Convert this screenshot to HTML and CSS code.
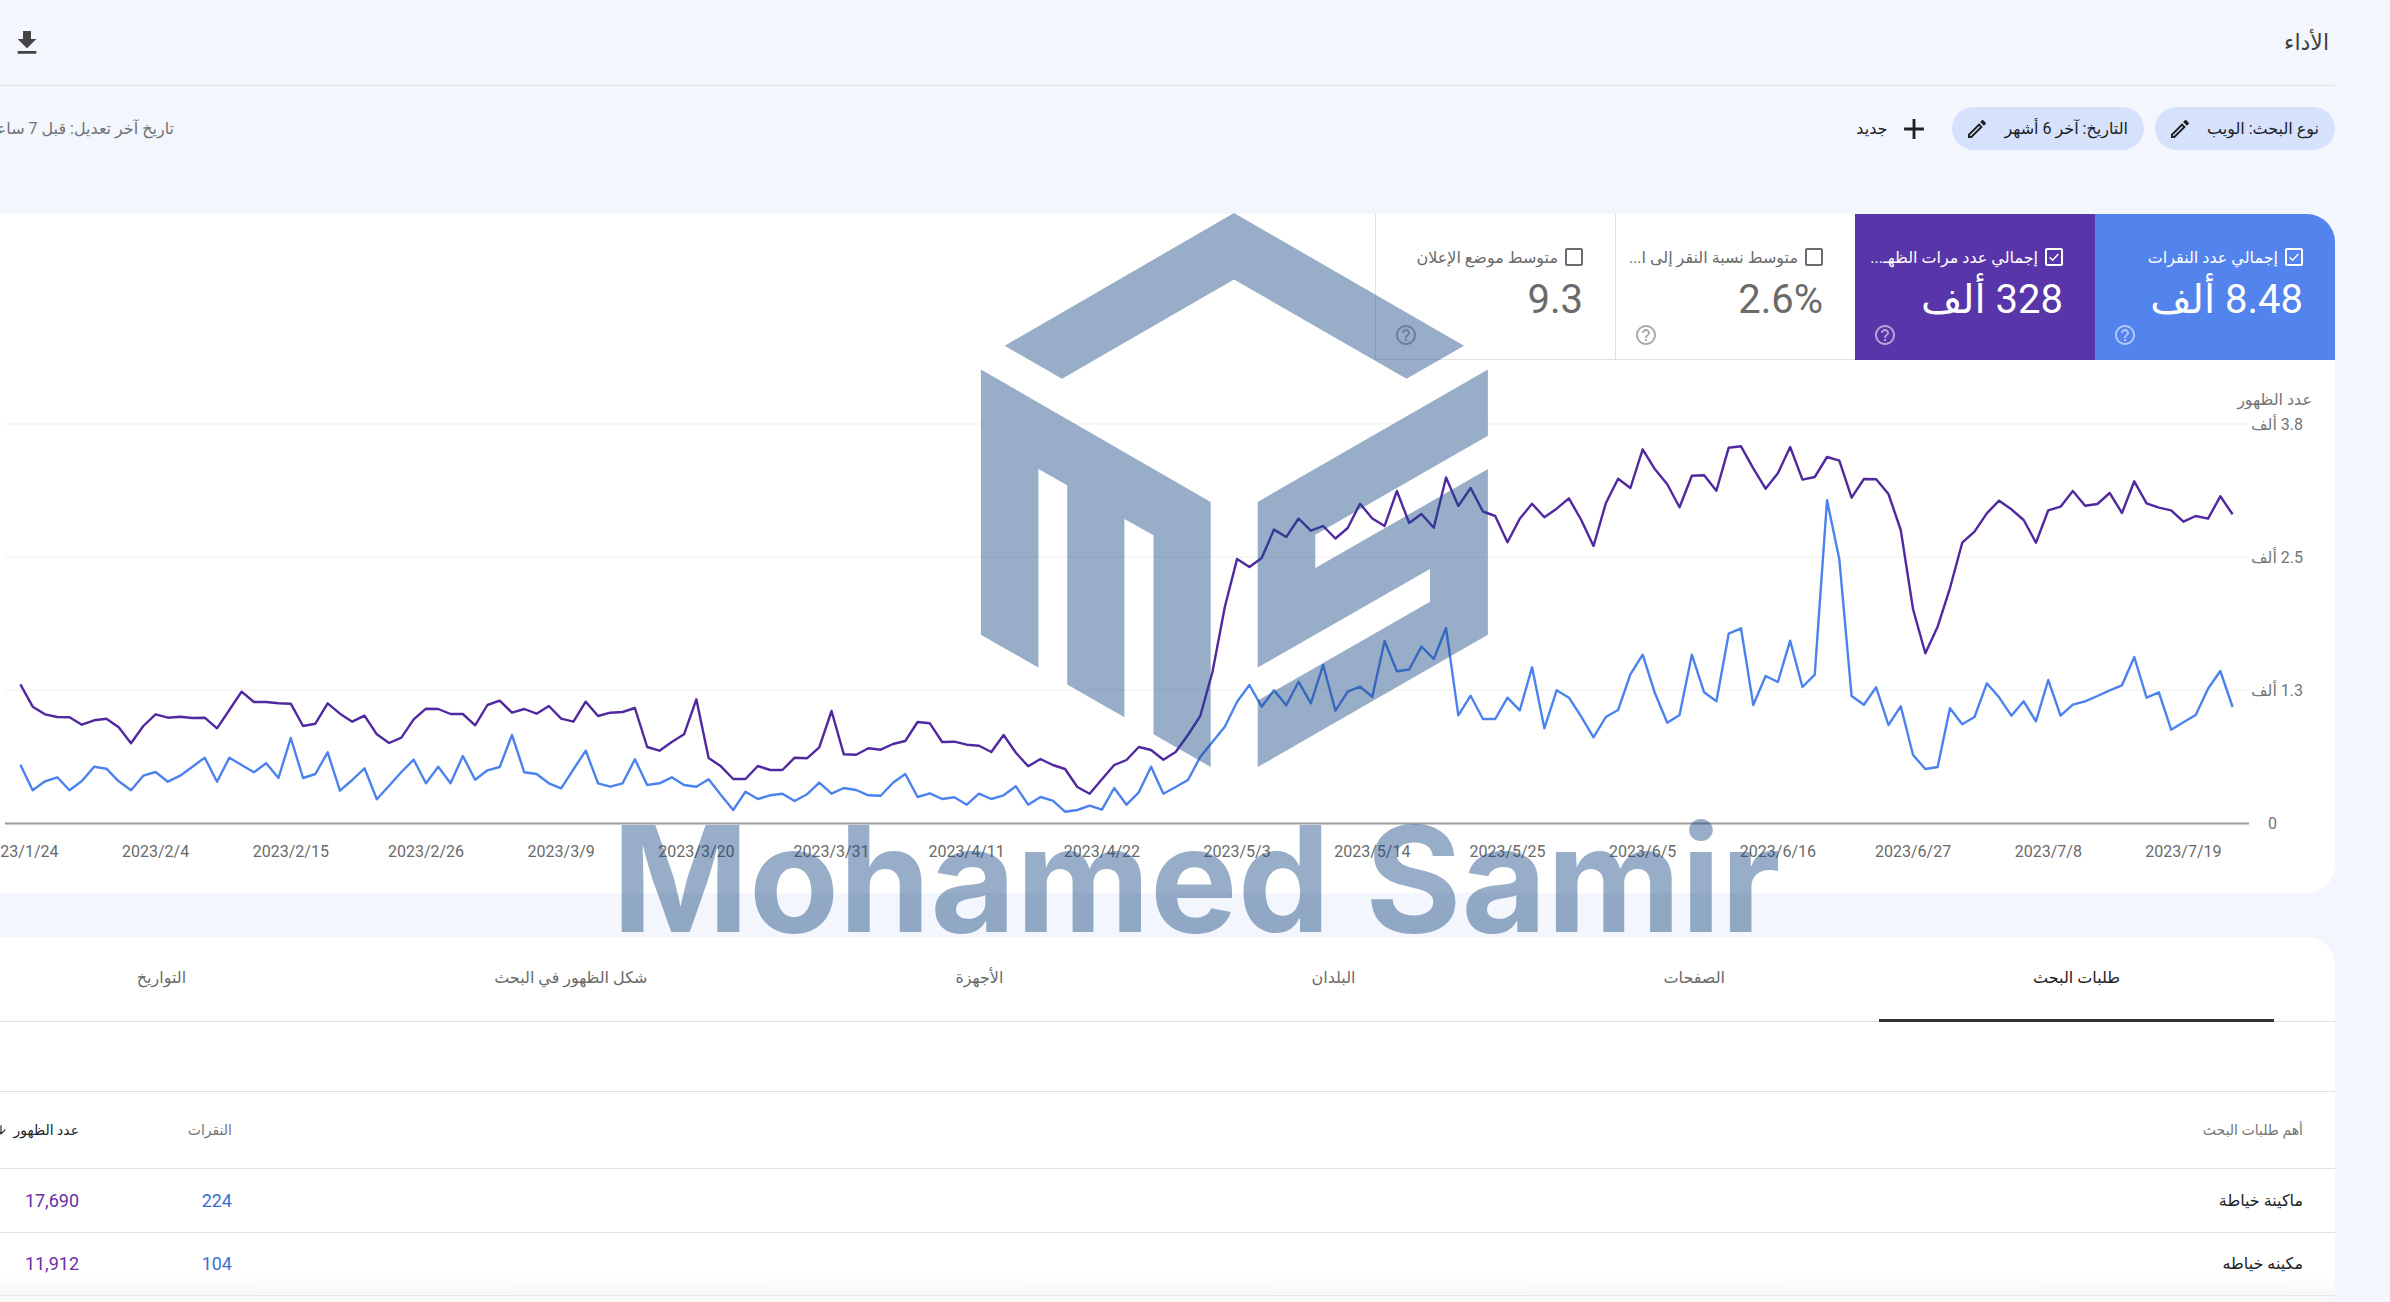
FILE: index.html
```html
<!DOCTYPE html>
<html lang="ar" dir="rtl">
<head>
<meta charset="utf-8">
<title>الأداء</title>
<link rel="stylesheet" href="styles.css">
</head>
<body>
<svg class="defs" width="0" height="0" aria-hidden="true">
  <symbol id="i-edit" viewBox="0 0 24 24"><path d="M14.06 9.02l.92.92L5.92 19H5v-.92l9.06-9.06M17.66 3c-.25 0-.51.1-.7.29l-1.83 1.83 3.75 3.75 1.83-1.83c.39-.39.39-1.02 0-1.41l-2.34-2.34c-.2-.2-.45-.29-.71-.29zm-3.6 3.19L3 17.25V21h3.75L17.81 9.94l-3.75-3.75z"/></symbol>
  <symbol id="i-box" viewBox="0 0 24 24"><path d="M19 5v14H5V5h14m0-2H5c-1.1 0-2 .9-2 2v14c0 1.1.9 2 2 2h14c1.1 0 2-.9 2-2V5c0-1.1-.9-2-2-2z"/></symbol>
  <symbol id="i-check" viewBox="0 0 24 24"><path d="M19 5v14H5V5h14m0-2H5c-1.1 0-2 .9-2 2v14c0 1.1.9 2 2 2h14c1.1 0 2-.9 2-2V5c0-1.1-.9-2-2-2z"/><path d="M7.6 12.2l3 3 5.8-6.2" fill="none" stroke="currentColor" stroke-width="1.5"/></symbol>
  <symbol id="i-help" viewBox="0 0 24 24"><path d="M11 18h2v-2h-2v2zm1-16C6.48 2 2 6.48 2 12s4.48 10 10 10 10-4.48 10-10S17.52 2 12 2zm0 18c-4.41 0-8-3.59-8-8s3.59-8 8-8 8 3.59 8 8-3.59 8-8 8zm0-14c-2.21 0-4 1.79-4 4h2c0-1.1.9-2 2-2s2 .9 2 2c0 2-3 1.75-3 5h2c0-2.25 3-2.5 3-5 0-2.21-1.79-4-4-4z"/></symbol>
</svg>

<main class="page">
  <header class="topbar">
    <h1 class="title">الأداء</h1>
    <svg class="icon-download" viewBox="0 0 24 24"><path d="M19 9h-4V3H9v6H5l7 7 7-7zM5 18v2h14v-2H5z"/></svg>
  </header>

  <div class="toolbar">
    <button class="chip"><span>نوع البحث: الويب</span><svg class="icon-edit"><use href="#i-edit"/></svg></button>
    <button class="chip"><span>التاريخ: آخر 6 أشهر</span><svg class="icon-edit"><use href="#i-edit"/></svg></button>
    <button class="new-btn"><svg class="icon-add" viewBox="0 0 24 24"><path d="M19 13h-6v6h-2v-6H5v-2h6V5h2v6h6v2z"/></svg><span>جديد</span></button>
    <div class="updated">تاريخ آخر تعديل: قبل 7 ساعات</div>
  </div>

  <section class="card chart-card">
    <div class="tiles">
      <div class="tile tile-blue">
        <div class="tile-label"><svg class="icon-box"><use href="#i-check"/></svg><span>إجمالي عدد النقرات</span></div>
        <div class="tile-value">8.48 ألف</div>
        <svg class="icon-help"><use href="#i-help"/></svg>
      </div>
      <div class="tile tile-purple">
        <div class="tile-label"><svg class="icon-box"><use href="#i-check"/></svg><span>إجمالي عدد مرات الظهـ...</span></div>
        <div class="tile-value">328 ألف</div>
        <svg class="icon-help"><use href="#i-help"/></svg>
      </div>
      <div class="tile tile-plain">
        <div class="tile-label"><svg class="icon-box"><use href="#i-box"/></svg><span>متوسط نسبة النقر إلى ا...</span></div>
        <div class="tile-value">2.6%</div>
        <svg class="icon-help"><use href="#i-help"/></svg>
      </div>
      <div class="tile tile-plain">
        <div class="tile-label"><svg class="icon-box"><use href="#i-box"/></svg><span>متوسط موضع الإعلان</span></div>
        <div class="tile-value">9.3</div>
        <svg class="icon-help"><use href="#i-help"/></svg>
      </div>
    </div>

    <svg class="chart" viewBox="0 360 2335 533" width="2335" height="533">
      <g class="grid">
        <line x1="5" x2="2249" y1="424" y2="424"/>
        <line x1="5" x2="2249" y1="557" y2="557"/>
        <line x1="5" x2="2249" y1="690" y2="690"/>
      </g>
      <line class="axis" x1="5" x2="2249" y1="823.5" y2="823.5"/>
      <g transform="translate(20.4 0) scale(12.29 1)">
        <polyline class="line line-purple" points="0,684.3 1,706.7 2,714.3 3,717 4,717.3 5,724.7 6,720.3 7,718.7 8,727.3 9,743.3 10,726 11,714.3 12,717.7 13,716.7 14,718 15,717.7 16,728.3 17,710 18,691.7 19,702 20,702 21,703.3 22,703.7 23,726 24,723.7 25,703.3 26,713.7 27,721.7 28,715.7 29,734.3 30,743 31,737.7 32,719.3 33,708.7 34,709 35,714 36,714 37,725.3 38,705 39,700.7 40,712.7 41,709 42,713.7 43,706 44,718.7 45,721.7 46,701.7 47,716 48,712.7 49,712 50,708 51,747 52,750.7 53,742 54,734.3 55,699.3 56,758 57,766.3 58,779 59,779 60,766 61,770 62,770 63,757.7 64,758.3 65,747.3 66,711 67,754.3 68,754.7 69,748.3 70,749.7 71,744 72,741 73,722 74,723.3 75,742 76,741.7 77,744.7 78,745.7 79,752 80,735 81,752.7 82,766.3 83,759 84,765 85,769 86,787 87,793.7 88,779.3 89,765 90,760 91,747 92,750 93,759.7 94,752 95,735 96,716 97,671.7 98,607 99,558.9 100,567 101,558 102,529.6 103,537 104,518.5 105,530.7 106,526 107,538.5 108,528 109,503.7 110,518.5 111,526 112,491 113,523 114,514 115,527.8 116,477.5 117,506 118,488 119,511.5 120,516 121,542.3 122,518.7 123,503.7 124,517.3 125,508.7 126,498.3 127,520 128,546 129,503.3 130,478.7 131,488 132,449.3 133,469.3 134,484.3 135,507.3 136,475.7 137,475.3 138,490.7 139,447.7 140,446.3 141,468.3 142,488.7 143,473.3 144,447 145,479.7 146,477 147,457 148,460.7 149,497.7 150,479 151,479.3 152,494 153,530 154,609.3 155,653.3 156,626.7 157,588.3 158,542.7 159,531.7 160,513.3 161,500.7 162,509.3 163,520 164,542.7 165,510.3 166,506.7 167,491 168,505.7 169,504 170,493 171,513 172,481.3 173,503.3 174,507.7 175,510.3 176,521.7 177,516 178,518.7 179,496.3 180,514.3"/>
        <polyline class="line line-blue" points="0,764.7 1,790.3 2,781.3 3,777.3 4,790.3 5,781 6,766.7 7,768.7 8,781.3 9,790.3 10,775.7 11,772 12,781.7 13,775.7 14,766.7 15,757.7 16,781.7 17,757.7 18,765 19,772.3 20,763.3 21,778 22,738 23,778 24,774 25,752.3 26,790.7 27,780 28,768.3 29,799.3 30,785.7 31,772 32,759.7 33,783.3 34,766.7 35,783.3 36,756 37,779.7 38,770.3 39,767 40,735 41,772.3 42,774 43,783.3 44,788.3 45,769.3 46,750.7 47,783.3 48,786.7 49,783.3 50,759.3 51,785 52,783.3 53,777.3 54,785 55,786.7 56,779.3 57,795 58,810 59,791.7 60,799 61,795.3 62,793.7 63,801 64,794.3 65,782.7 66,793.7 67,788 68,790 69,795.3 70,795.7 71,782.7 72,774 73,797 74,793.3 75,799 76,797.3 77,804.7 78,793.7 79,799 80,795.3 81,786.3 82,804.7 83,797 84,800.7 85,811.7 86,810 87,805.7 88,809.7 89,788 90,804.7 91,792.3 92,766.7 93,793.7 94,787 95,780 96,757 97,741.7 98,726.7 99,701.7 100,685 101,706.7 102,690.3 103,705.3 104,681.7 105,703.3 106,665 107,710.7 108,691.7 109,686.7 110,696.7 111,641 112,671.3 113,669.5 114,646.5 115,659 116,628 117,715.3 118,695.7 119,719 120,719 121,697.7 122,710.3 123,667.3 124,728.3 125,690.3 126,697.7 127,716.7 128,737.3 129,717 130,710 131,674.3 132,654.7 133,693.3 134,722.7 135,715 136,654.7 137,692.3 138,701.3 139,633.7 140,628.3 141,705 142,676 143,682 144,640.7 145,687 146,674.7 147,500.3 148,559.3 149,696 150,704.7 151,687.3 152,725 153,706.3 154,755 155,769 156,767 157,708.3 158,724.3 159,717 160,683.3 161,697.3 162,715.7 163,701.3 164,721.3 165,680 166,715.7 167,704.7 168,701.3 169,696 170,690.3 171,685.3 172,657 173,697.7 174,692.3 175,729.7 176,722.3 177,715 178,688.7 179,671 180,707"/>
      </g>
      <g class="ticks">
        <text x="2312" y="405">عدد الظهور</text>
        <text x="2303" y="430">3.8 ألف</text>
        <text x="2303" y="563">2.5 ألف</text>
        <text x="2303" y="696">1.3 ألف</text>
        <text x="2277" y="829">0</text>
      </g>
      <g class="dates">
        <text x="20.4" y="857">2023/1/24</text>
        <text x="155.6" y="857">2023/2/4</text>
        <text x="290.8" y="857">2023/2/15</text>
        <text x="426" y="857">2023/2/26</text>
        <text x="561.2" y="857">2023/3/9</text>
        <text x="696.4" y="857">2023/3/20</text>
        <text x="831.5" y="857">2023/3/31</text>
        <text x="966.7" y="857">2023/4/11</text>
        <text x="1101.9" y="857">2023/4/22</text>
        <text x="1237.1" y="857">2023/5/3</text>
        <text x="1372.3" y="857">2023/5/14</text>
        <text x="1507.5" y="857">2023/5/25</text>
        <text x="1642.7" y="857">2023/6/5</text>
        <text x="1777.9" y="857">2023/6/16</text>
        <text x="1913.1" y="857">2023/6/27</text>
        <text x="2048.3" y="857">2023/7/8</text>
        <text x="2183.4" y="857">2023/7/19</text>
      </g>
    </svg>
  </section>

  <section class="card table-card">
    <nav class="tabs">
      <div class="tab tab-active">طلبات البحث</div>
      <div class="tab">الصفحات</div>
      <div class="tab">البلدان</div>
      <div class="tab">الأجهزة</div>
      <div class="tab">شكل الظهور في البحث</div>
      <div class="tab">التواريخ</div>
    </nav>
    <div class="filter-row"></div>
    <div class="row row-head">
      <div class="cell">أهم طلبات البحث</div>
      <div class="cell">النقرات</div>
      <div class="cell cell-sorted">عدد الظهور<svg class="icon-sort" viewBox="0 0 24 24"><path d="M20 12l-1.41-1.41L13 16.17V4h-2v12.17l-5.58-5.59L4 12l8 8 8-8z"/></svg></div>
    </div>
    <div class="row">
      <div class="cell cell-query">ماكينة خياطة</div>
      <div class="cell cell-clicks">224</div>
      <div class="cell cell-impr">17,690</div>
    </div>
    <div class="row">
      <div class="cell cell-query">مكينه خياطه</div>
      <div class="cell cell-clicks">104</div>
      <div class="cell cell-impr">11,912</div>
    </div>
    <div class="row"></div>
  </section>
</main>

<div class="bottom-fade"></div>

<svg class="watermark" viewBox="0 0 2390 1302" width="2390" height="1302">
  <polygon points="1234,213 1464,345.8 1406.5,378.7 1234,279.5 1062,378.7 1004.7,345.8"/>
  <polygon points="980.9,369.4 1210.7,501.9 1210.7,767 1153.5,734.2 1153.5,535.2 1124.4,518.9 1124.4,717.2 1067.2,684.6 1067.2,485.2 1038.4,469 1038.4,667.6 980.9,634.7"/>
  <polygon points="1257.7,501.9 1487.9,369.4 1487.9,435.7 1315.3,534.8 1315.3,568.1 1487.9,469 1487.9,634.7 1257.7,767.1 1257.7,700.6 1430,601.8 1430,568.9 1257.7,667.6"/>
  <text class="watermark-text" x="612" y="932">Mohamed Samir</text>
</svg>
</body>
</html>
```

FILE: styles.css
```css
* { box-sizing: border-box; }

html, body {
  margin: 0;
  height: 100%;
  overflow: hidden;
}

body {
  position: relative;
  background: #f3f6fc;
  color: #3c4043;
  font-family: Roboto, "Liberation Sans", "DejaVu Sans", sans-serif;
  font-size: 16px;
}

.defs { position: absolute; }

.page {
  width: 2400px;
  margin-right: 55px;
}

.topbar {
  height: 86px;
  display: flex;
  align-items: center;
  justify-content: space-between;
  padding: 0 6px 0 76px;
  border-bottom: 1px solid #e1e4e7;
}

.title {
  margin: 0;
  font-size: 22px;
  font-weight: 400;
  color: #3c4043;
}

.icon-download { width: 32px; height: 32px; fill: #444; }

.toolbar {
  height: 128px;
  padding-top: 21px;
  display: flex;
  align-items: flex-start;
  gap: 11px;
}

.chip {
  height: 43px;
  display: flex;
  align-items: center;
  gap: 15px;
  padding: 0 16px 0 13px;
  border: 0;
  border-radius: 22px;
  background: #d6e2fb;
  color: #202124;
  font: inherit;
  white-space: nowrap;
}

.icon-edit { width: 24px; height: 24px; fill: #202124; }

.new-btn {
  height: 43px;
  display: flex;
  align-items: center;
  gap: 10px;
  padding: 0 10px 0 0;
  border: 0;
  background: none;
  color: #202124;
  font: inherit;
}

.icon-add { width: 34px; height: 34px; fill: #202124; }

.updated {
  width: 239px;
  height: 43px;
  margin-right: auto;
  line-height: 43px;
  color: #6f7377;
  white-space: nowrap;
}

.card {
  background: #fff;
  border-radius: 0 28px 28px 0;
}

.chart-card {
  height: 679px;
  margin-bottom: 44px;
  overflow: hidden;
}

.tiles { display: flex; height: 146px; }

.tile {
  width: 240px;
  height: 146px;
  padding: 31px 29px 0 18px;
  display: flex;
  flex-direction: column;
}

.tile-blue { background: #5383ec; color: #fff; }
.tile-purple { background: #5835a8; color: #fff; }
.tile-plain {
  color: #6a6a6a;
  border-left: 1px solid #e0e0e0;
  border-bottom: 1px solid #e0e0e0;
}

.tile-label {
  height: 24px;
  display: flex;
  align-items: center;
  gap: 4px;
  font-size: 16px;
  white-space: nowrap;
}

.icon-box { width: 24px; height: 24px; fill: currentColor; flex: none; }

.tile-value {
  margin: 7px 3px 0 0;
  font-size: 40px;
  line-height: 48px;
}

.icon-help {
  width: 24px;
  height: 24px;
  fill: currentColor;
  opacity: .55;
  align-self: flex-end;
  margin-top: -1px;
}

.chart { display: block; }

.grid line { stroke: #efefef; stroke-width: 1; }
.axis { stroke: #9a9a9a; stroke-width: 2; }

.line {
  fill: none;
  stroke-width: 2.4;
  stroke-linejoin: round;
  vector-effect: non-scaling-stroke;
}
.line-purple { stroke: #5028a0; }
.line-blue { stroke: #4c82ee; }

.ticks text {
  font-size: 16px;
  fill: #757575;
  text-anchor: start;
}

.dates text {
  font-size: 16px;
  fill: #6a6a6a;
  text-anchor: middle;
  direction: ltr;
}

.table-card { border-radius: 0 28px 0 0; }

.tabs {
  height: 85px;
  display: flex;
  border-bottom: 1px solid #e0e0e0;
  padding-right: 61px;
}

.tab {
  padding: 0 154px;
  line-height: 82px;
  color: #6a6a6a;
  font-size: 16px;
  white-space: nowrap;
}

.tab-active {
  color: #202124;
  border-bottom: 3px solid #333;
  height: 85px;
}

.filter-row {
  height: 70px;
  border-bottom: 1px solid #e0e0e0;
}

.row {
  height: 63.5px;
  display: grid;
  grid-template-columns: 1fr 153px 112px;
  align-items: center;
  padding: 0 32px;
  border-bottom: 1px solid #e0e0e0;
}

.row-head { height: 77px; color: #757575; font-size: 14px; }

.cell-sorted {
  color: #202124;
  display: flex;
  align-items: center;
  gap: 6px;
}

.icon-sort { width: 14px; height: 14px; fill: #202124; flex: none; }

.cell-query { color: #202124; }
.cell-clicks { color: #3a6fd0; font-size: 18px; }
.cell-impr { color: #6a2fa8; font-size: 18px; }

.bottom-fade {
  position: absolute;
  left: 0;
  right: 55px;
  bottom: 0;
  height: 26px;
  background: linear-gradient(rgba(240,240,240,0), rgba(240,240,240,.6));
}

.watermark {
  position: absolute;
  top: 0;
  left: 0;
  pointer-events: none;
}

.watermark polygon { fill: rgba(26,73,131,.45); }

.watermark-text {
  font-family: Inter, Roboto, sans-serif;
  font-weight: 700;
  font-size: 147px;
  fill: rgba(26,73,131,.45);
  direction: ltr;
}
```
